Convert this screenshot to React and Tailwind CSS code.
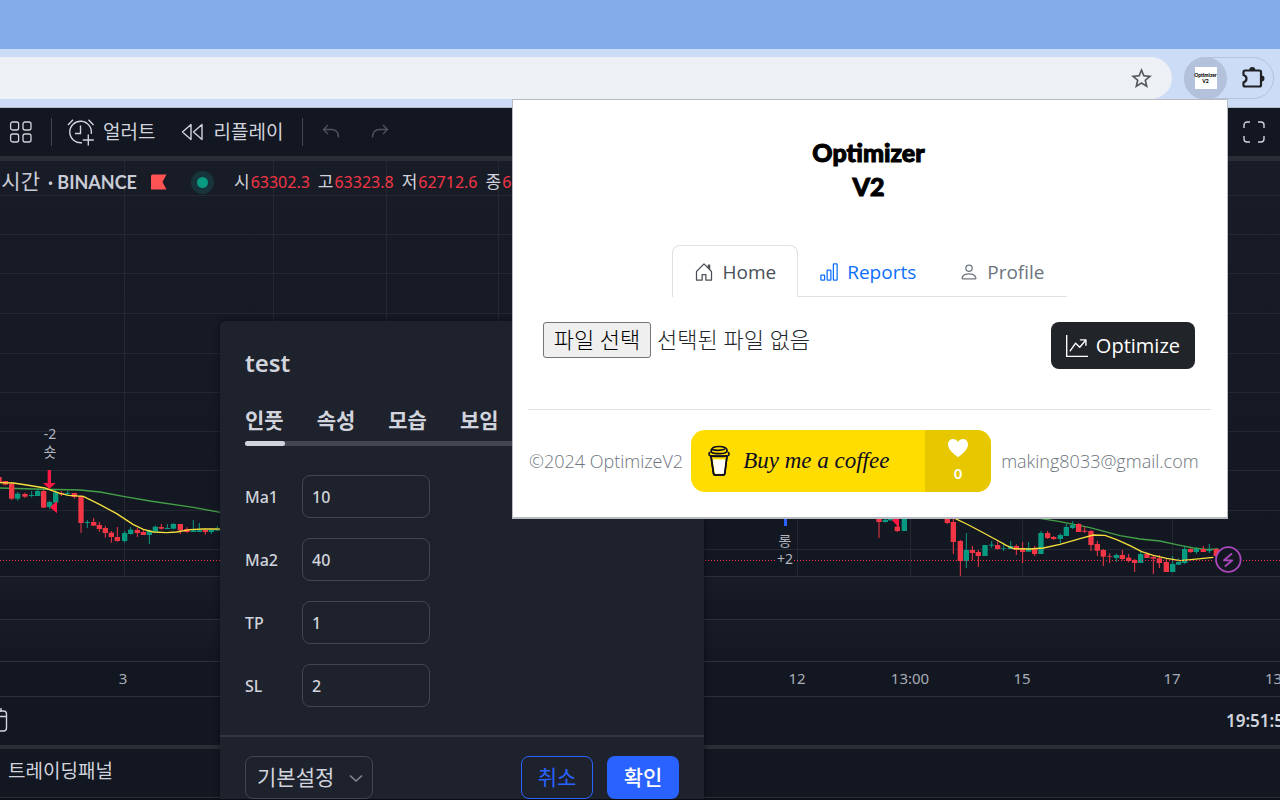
import { useRef, useState } from "react";
import {
  BsBarChart,
  BsGraphUpArrow,
  BsHouseDoor,
  BsPerson,
} from "react-icons/bs";
import { MdStarBorder } from "react-icons/md";

const UP = "#089981";
const DOWN = "#f23645";

// Each candle: [x, body top, body bottom, wick top, wick bottom, rising]
const EARLY = [
  [-3, 201, 216, 201, 216, 0], [16, 213, 224, 213, 226, 0], [35, 221, 266, 218, 270, 0],
  [53, 251, 266, 246, 272, 1], [75, 252, 260, 248, 264, 0], [95, 255, 258, 243, 262, 1],
  [113, 243, 258, 238, 258, 1], [131, 243, 293, 240, 293, 0], [149, 276, 291, 272, 297, 1],
  [167, 247, 278, 240, 280, 1], [184, 249, 253, 243, 258, 0], [203, 249, 252, 243, 256, 1],
  [223, 249, 261, 249, 266, 0], [243, 258, 339, 256, 369, 0], [262, 336, 339, 330, 354, 1],
  [281, 336, 347, 324, 347, 0], [298, 345, 357, 336, 365, 0], [316, 354, 369, 347, 383, 0],
  [334, 368, 381, 363, 398, 0], [352, 381, 393, 351, 395, 0], [374, 369, 393, 363, 398, 1],
  [392, 359, 372, 351, 374, 1], [412, 360, 369, 354, 381, 0], [430, 366, 375, 360, 375, 0],
  [448, 362, 375, 359, 402, 1], [466, 350, 365, 347, 366, 1], [484, 351, 356, 342, 359, 0],
  [502, 354, 357, 342, 357, 1], [520, 342, 356, 339, 358, 1], [541, 342, 361, 342, 372, 0],
  [561, 357, 366, 352, 369, 0], [580, 361, 366, 330, 366, 1], [598, 361, 366, 339, 366, 1],
  [616, 360, 366, 357, 374, 0], [634, 360, 366, 358, 372, 1], [652, 358, 362, 348, 363, 1],
];

const LATE = [
  [-303, 30, 51, 30, 99, 0], [-284, 44, 51, 38, 53, 1], [-268, 40, 46, 36, 47, 1],
  [-248, 65, 78, 60, 81, 0], [-227, 30, 78, 30, 78, 1], [-98, 30, 54, 30, 57, 0],
  [-80, 51, 111, 38, 147, 0], [-59, 108, 168, 105, 213, 0], [-41, 135, 168, 84, 189, 1],
  [-23, 135, 144, 123, 166, 0], [-5, 141, 153, 135, 186, 0], [15, 120, 153, 120, 153, 1],
  [35, 119, 122, 108, 129, 1], [53, 120, 132, 110, 134, 0], [71, 129, 131, 113, 138, 1],
  [92, 123, 132, 108, 132, 1], [109, 123, 135, 118, 150, 0], [128, 129, 141, 111, 174, 0],
  [146, 129, 140, 111, 140, 1], [164, 129, 147, 123, 153, 0], [183, 84, 147, 78, 147, 1],
  [203, 84, 99, 78, 102, 0], [221, 96, 102, 93, 105, 0], [241, 90, 102, 85, 114, 1],
  [259, 66, 93, 57, 93, 1], [278, 60, 69, 48, 72, 1], [296, 57, 81, 54, 81, 0],
  [314, 77, 80, 65, 84, 0], [333, 78, 120, 75, 138, 0], [352, 117, 137, 108, 153, 0],
  [370, 135, 155, 132, 183, 0], [389, 153, 155, 145, 174, 0], [409, 150, 159, 146, 171, 1],
  [427, 150, 162, 135, 166, 0], [446, 158, 168, 147, 172, 0], [464, 165, 174, 162, 201, 0],
  [482, 147, 174, 139, 174, 1], [501, 147, 159, 143, 159, 0], [520, 156, 161, 150, 207, 0],
  [538, 160, 174, 150, 189, 0], [559, 171, 201, 162, 201, 0], [578, 177, 201, 153, 201, 1],
  [596, 171, 179, 160, 180, 1], [614, 132, 174, 124, 177, 1], [632, 132, 141, 130, 144, 0],
  [649, 132, 141, 126, 147, 1], [670, 132, 141, 123, 141, 0], [688, 135, 138, 117, 144, 1],
  [709, 132, 153, 130, 155, 0],
];

function Candles({ data }) {
  return data.map(([x, top, bottom, high, low, rising]) => (
    <g key={x} fill={rising ? UP : DOWN}>
      <rect x={x - 1.5} y={high} width="3" height={low - high} />
      <rect x={x - 8} y={top} width="16" height={bottom - top} />
    </g>
  ));
}

const COLUMNS = [124, 273, 386, 498, 797, 910, 1022, 1172];
const ROWS = [195, 234, 273, 313, 353, 392, 431, 470, 510, 549];

function Chart() {
  return (
    <svg
      className="block h-[500px] w-full"
      viewBox="0 161 1280 500"
      preserveAspectRatio="xMinYMin slice"
      aria-hidden="true"
    >
      <defs>
        <linearGradient id="pane" x1="0" y1="0" x2="0" y2="1">
          <stop offset="0" stopColor="#181c27" />
          <stop offset="1" stopColor="#131722" />
        </linearGradient>
      </defs>
      <rect x="0" y="161" width="1280" height="415" fill="url(#pane)" />
      <rect x="0" y="577" width="1280" height="42" fill="url(#pane)" />
      <rect x="0" y="620" width="1280" height="41" fill="url(#pane)" />
      <g fill="#242832">
        {COLUMNS.map((x) => (
          <rect key={x} x={x} y="161" width="1" height="415" />
        ))}
        {ROWS.map((y) => (
          <rect key={y} x="0" y={y} width="1280" height="1" />
        ))}
      </g>
      <g fill="#2e313b">
        <rect x="0" y="576" width="1280" height="1" />
        <rect x="0" y="619" width="1280" height="1" />
      </g>
      <g transform="translate(0 410) scale(0.33333)">
        <path d="M0 234 100 237 240 240 300 246 374 260 450 273 580 292 660 307" fill="none" stroke="#43a047" strokeWidth="4" />
        <Candles data={EARLY} />
        <path d="M0 218 40 219 80 225 135 234 180 250 205 256 250 259 300 284 350 311 400 344 430 358 460 366 500 368 530 366 570 359 610 357 660 357" fill="none" stroke="#f5df3c" strokeWidth="4" />
        <path d="M143 180h10v39h14l-19 18-19-18h14z" fill="#ff1744" />
        <path d="M150 292 171 273v37z" fill="#ff1744" />
      </g>
      <g transform="translate(980 505) scale(0.33333)">
        <path d="M165 38 240 50 330 68 420 92 480 102 540 108 600 121 640 129 680 133 715 132" fill="none" stroke="#43a047" strokeWidth="4" />
        <Candles data={LATE} />
        <path d="M-110 32-80 38-40 57 0 78 50 105 80 122 100 131 150 132 190 129 240 118 300 101 340 90 375 91 410 104 450 122 485 140 520 151 560 160 600 167 640 163 700 157" fill="none" stroke="#f5df3c" strokeWidth="4" />
        <path d="M-264 46-243 30v38z" fill="#ff1744" />
      </g>
      <rect x="784" y="500" width="3" height="26" fill="#2962ff" />
      <path d="M0 560.5H776M794 560.5H1214M1243 560.5H1280" stroke={DOWN} strokeDasharray="1 2" />
      <circle cx="1228.3" cy="559.5" r="12.3" fill="#131722" stroke="#ab47bc" strokeWidth="1.8" />
      <path d="M1232 553.5 1224 560.3h8.4l-7.6 6.2" fill="none" stroke="#ab47bc" strokeWidth="1.8" strokeLinejoin="round" />
    </svg>
  );
}

function GridIcon() {
  return (
    <svg width="24" height="24" viewBox="0 0 24 24" fill="none" stroke="currentColor" strokeWidth="1.3" aria-hidden="true">
      <rect x="1.6" y="2" width="8" height="8" rx="2" />
      <rect x="14" y="2" width="8" height="8" rx="2" />
      <rect x="1.6" y="14" width="8" height="8" rx="2" />
      <rect x="14" y="14" width="8" height="8" rx="2" />
    </svg>
  );
}

function AlertIcon() {
  return (
    <svg width="28" height="28" viewBox="0 0 28 28" fill="none" stroke="currentColor" strokeWidth="1.4" aria-hidden="true">
      <path d="M15 24.7a10.8 10.8 0 1 1 9.200-8.800" />
      <path d="M13.500 7.500v8H8M1 7l5-5.3M21.5 1.7l5 5.3M21.3 16.5v11M15.8 22h11" />
    </svg>
  );
}

function RewindIcon() {
  return (
    <svg width="23" height="20" viewBox="0 0 23 20" fill="none" stroke="currentColor" strokeWidth="1.4" strokeLinejoin="round" aria-hidden="true">
      <path d="M10 2.500v15L1.500 10zM21 2.500v15L12.500 10z" />
    </svg>
  );
}

function UndoIcon({ flip }) {
  return (
    <svg width="18" height="16" viewBox="0 0 18 16" fill="none" stroke="currentColor" strokeWidth="1.3" aria-hidden="true">
      {flip ? (
        <path d="M12 1l4.5 4.5L12 10M16.500 5.500H8.500Q1.500 5.500 1.500 13.500" />
      ) : (
        <path d="M6 1L1.500 5.500 6 10M1.500 5.500H9.500Q16.500 5.500 16.500 13.500" />
      )}
    </svg>
  );
}

function FullscreenIcon() {
  return (
    <svg width="22" height="22" viewBox="0 0 22 22" fill="none" stroke="currentColor" strokeWidth="1.4" aria-hidden="true">
      <path d="M1 7V4a3 3 0 0 1 3-3h3M15 1h3a3 3 0 0 1 3 3v3M21 15v3a3 3 0 0 1-3 3h-3M7 21H4a3 3 0 0 1-3-3v-3" />
    </svg>
  );
}

function PuzzleIcon() {
  return (
    <svg width="24" height="24" viewBox="0 0 24 24" aria-hidden="true">
      <path
        d="M4 4.500H18.500Q20 4.500 20 6V19Q20 20.500 18.500 20.500H4Q2.500 20.500 2.500 19V16.300Q5.500 15.500 5.500 12.700T2.500 9V6Q2.500 4.500 4 4.500Z"
        fill="none"
        stroke="#1f2124"
        strokeWidth="2.200"
        strokeLinejoin="round"
      />
      <path d="M8.300 4a3 3 0 0 1 6 0zM20.500 9.500a3 3 0 0 1 0 6z" fill="#1f2124" />
    </svg>
  );
}

function CupIcon() {
  return (
    <svg width="24" height="32" viewBox="0 0 24 32" fill="none" stroke="#0d0c22" strokeWidth="1.700" strokeLinejoin="round" aria-hidden="true">
      <path d="M4 11h16l-2.200 17.500Q17.500 30 16 30H8.500Q6.800 30 6.500 28.500z" fill="#ffdd00" />
      <path d="M5.800 14.500h12.800l-1.800 14.300H8z" fill="#fff" stroke="none" />
      <path d="M4 11 6.500 28.500Q6.800 30 8.500 30H16Q17.500 30 17.800 28.500L20 11" />
      <path d="M3.200 7.300Q2 7.500 2 9t1.400 1.800Q12 12 20.800 10.800 22 10.500 22 9t-1.300-1.700" />
      <path d="M4 6.800Q4 1.500 12 1.500T20.200 6Q19 8.700 12 8.700 6 8.700 4 6.800ZM5 4.500Q11 6.300 18 4.300" />
    </svg>
  );
}

function HeartIcon() {
  return (
    <svg width="22" height="20" viewBox="0 0 22 20" fill="#fff" aria-hidden="true">
      <path d="M11 19.300C7 16 1 12 1 6.500 1 3 3.500 1 6 1c2.200 0 4 1 5 3 1-2 2.800-3 5-3 2.500 0 5 2 5 5.500 0 5.500-6 9.500-10 12.800z" />
    </svg>
  );
}

function BrowserBar() {
  return (
    <header>
      <div className="h-[49px] bg-[#84ace9]" />
      <div className="flex h-[59px] items-start border-b border-[#b3bccb] bg-[#ccdcf6] pt-2">
        <div className="flex h-[42px] flex-1 items-center justify-end rounded-r-full bg-[#edf0f5] pr-[18px]">
          <button type="button" aria-label="북마크" className="text-[#54585d]">
            <MdStarBorder className="size-[25px]" />
          </button>
        </div>
        <div className="mr-[6px] ml-3 flex h-[42px] w-[90px] items-center rounded-full border border-[#b4c3db]">
          <button type="button" className="-ml-px flex size-[43px] items-center justify-center rounded-full bg-[#b3c2da]">
            <span className="flex size-[22px] flex-col items-center justify-center bg-white font-['Lato'] text-[5px] leading-[6px] font-black text-black">
              <span>Optimizer</span>
              <span>V2</span>
            </span>
          </button>
          <button type="button" aria-label="확장 프로그램" className="ml-[14px]">
            <PuzzleIcon />
          </button>
        </div>
      </div>
    </header>
  );
}

function Toolbar() {
  return (
    <div className="flex h-[53px] items-center border-b-[5px] border-[#2a2d36] bg-[#131722] pr-[15px] pl-[9px] text-[19px] text-[#d1d4dc]">
      <button type="button" aria-label="레이아웃"><GridIcon /></button>
      <span className="ml-[18px] h-7 w-px bg-[#434651]" />
      <button type="button" className="ml-[15px] flex items-center gap-2">
        <AlertIcon />
        <span>얼러트</span>
      </button>
      <button type="button" className="ml-[26px] flex items-center gap-[9px]">
        <RewindIcon />
        <span>리플레이</span>
      </button>
      <span className="ml-[19px] h-7 w-px bg-[#434651]" />
      <button type="button" aria-label="되돌리기" className="ml-[19px] text-[#50535e]"><UndoIcon /></button>
      <button type="button" aria-label="다시 실행" className="ml-[31px] text-[#50535e]"><UndoIcon flip /></button>
      <button type="button" aria-label="전체 화면" className="ml-auto"><FullscreenIcon /></button>
    </div>
  );
}

function Price({ label, value }) {
  return (
    <span className="flex items-center gap-px">
      <span className="text-[17px] text-[#d1d4dc]">{label}</span>
      <span className="text-base text-[#f23645]">{value}</span>
    </span>
  );
}

function Legend() {
  return (
    <div className="absolute top-1.5 left-0 flex h-[30px] items-center whitespace-nowrap">
      <span className="-ml-[18px] text-[21px] text-[#c9ccd6]">실시간</span>
      <span className="ml-2 font-['Lato'] text-lg font-bold text-[#c9ccd6]">· BINANCE</span>
      <svg className="ml-3.5" width="16" height="16" viewBox="0 0 16 16" aria-hidden="true">
        <path d="M0 2Q0 .5 1.500.5H15.500L11.500 8l4 7.500H0z" fill="#ff5252" />
      </svg>
      <span className="mr-5 ml-6 flex size-[23px] items-center justify-center rounded-full bg-[#17343a]">
        <span className="size-[11px] rounded-full bg-[#089981]" />
      </span>
      <div className="flex gap-2">
        <Price label="시" value="63302.3" />
        <Price label="고" value="63323.8" />
        <Price label="저" value="62712.6" />
        <Price label="종" value="6" />
      </div>
    </div>
  );
}

function TradingPage() {
  return (
    <main>
      <Toolbar />
      <div className="relative overflow-hidden">
        <Chart />
        <Legend />
        <div className="absolute top-[264px] left-[50px] -translate-x-1/2 text-center text-sm leading-[18px] text-[#b2b5be]">
          <div>-2</div>
          <div>숏</div>
        </div>
        <div className="absolute top-[371px] left-[785px] -translate-x-1/2 text-center text-sm leading-[18px] text-[#b2b5be]">
          <div>롱</div>
          <div>+2</div>
        </div>
      </div>
      <div className="relative h-9 overflow-hidden border-y border-[#2e313b] bg-[#131722] text-[15px] leading-8 text-[#a9acb6]">
        <span className="absolute left-[123px] -translate-x-1/2">3</span>
        <span className="absolute left-[797px] -translate-x-1/2">12</span>
        <span className="absolute left-[910px] -translate-x-1/2">13:00</span>
        <span className="absolute left-[1022px] -translate-x-1/2">15</span>
        <span className="absolute left-[1172px] -translate-x-1/2">17</span>
        <span className="absolute left-[1265px]">13:00</span>
      </div>
      <div className="flex h-[52px] items-center justify-between overflow-hidden border-b-4 border-[#2a2d36] bg-[#131722] text-[#d1d4dc]">
        <button type="button" aria-label="날짜 이동" className="-ml-[15px]">
          <svg width="23" height="26" viewBox="0 0 23 26" fill="none" stroke="currentColor" strokeWidth="1.400" aria-hidden="true">
            <rect x="1" y="3" width="20.500" height="20" rx="3" />
            <path d="M1 8.500h20M6 0v4M16 0v4" />
          </svg>
        </button>
        <span className="-mr-1 text-[17px] font-semibold">19:51:5</span>
      </div>
      <div className="flex h-[49px] items-center border-b border-[#2e313b] bg-[#131722] pb-1 pl-2 text-[19px] text-[#d1d4dc]">
        트레이딩패널
      </div>
      <div className="h-0.5 bg-[#0e1018]" />
    </main>
  );
}

const FIELDS = [
  { name: "Ma1", value: "10" },
  { name: "Ma2", value: "40" },
  { name: "TP", value: "1" },
  { name: "SL", value: "2" },
];

function SettingsDialog() {
  return (
    <section
      role="dialog"
      aria-label="test"
      className="absolute top-[321px] left-[220px] w-[484px] rounded-t-md bg-[#1e222d] pt-[26px] text-[#d1d4dc] shadow-[0_0_6px_rgba(0,0,0,0.5)]"
    >
      <h2 className="px-[25px] text-2xl leading-8 font-semibold">test</h2>
      <div className="mt-7 px-[25px]">
        <div role="tablist" className="flex gap-[33px] text-[21px] leading-[26px] font-semibold">
          <button type="button" role="tab" aria-selected="true">인풋</button>
          <button type="button" role="tab" aria-selected="false">속성</button>
          <button type="button" role="tab" aria-selected="false">모습</button>
          <button type="button" role="tab" aria-selected="false">보임</button>
        </div>
        <div className="mt-2 h-[5px] rounded-full bg-[#434651]">
          <div className="h-full w-10 rounded-full bg-[#d1d4dc]" />
        </div>
      </div>
      <div className="mt-[29px] grid gap-5 px-[25px]">
        {FIELDS.map((field) => (
          <div key={field.name} className="flex items-center">
            <label htmlFor={field.name} className="w-[57px] text-base font-medium">
              {field.name}
            </label>
            <input
              id={field.name}
              defaultValue={field.value}
              className="h-[43px] w-32 rounded-lg border border-[#434651] bg-transparent px-[9px] text-base font-medium outline-none"
            />
          </div>
        ))}
      </div>
      <div className="mt-7 flex items-center border-t-2 border-[#313540] px-[25px] pt-[19px]">
        <div className="relative">
          <select
            aria-label="기본설정"
            className="h-[43px] w-32 appearance-none rounded-lg border border-[#434651] bg-transparent pl-[11px] text-[21px] outline-none"
          >
            <option>기본설정</option>
          </select>
          <svg className="pointer-events-none absolute top-[18px] right-2.5" width="14" height="9" viewBox="0 0 14 9" fill="none" stroke="#868993" strokeWidth="1.600" aria-hidden="true">
            <path d="M1 1.500l6 5.500 6-5.500" />
          </svg>
        </div>
        <button type="button" className="ml-auto h-[43px] w-[72px] rounded-lg border border-[#2962ff] text-[21px] text-[#2962ff]">
          취소
        </button>
        <button type="button" className="ml-3.5 h-[43px] w-[72px] rounded-lg bg-[#2962ff] text-[21px] font-medium text-white">
          확인
        </button>
      </div>
    </section>
  );
}

function OptimizerPopup() {
  const picker = useRef(null);
  const [fileName, setFileName] = useState("선택된 파일 없음");

  return (
    <section
      aria-label="Optimizer V2"
      className="absolute top-[99px] right-[52px] w-[716px] border border-b-2 border-[#b9bac2] bg-white pt-[35px] pr-4 pb-[25px] pl-[15px] font-['Open_Sans','Noto_Sans_CJK_KR',sans-serif]"
    >
      <h1 className="pr-0.5 text-center font-['Lato'] text-[25px] leading-[34px] font-black text-black [-webkit-text-stroke:1px_black]">
        Optimizer
        <br />
        V2
      </h1>
      <nav className="mt-[42px] flex justify-center text-[19px]">
        <a href="#home" className="flex h-[52px] items-center gap-2 rounded-t-lg border border-b-0 border-[#dee2e6] px-[21px] pt-px text-[#495057]">
          <BsHouseDoor className="size-5" />
          Home
        </a>
        <a href="#reports" className="flex h-[52px] items-center gap-2 border-b border-[#dee2e6] px-[21px] pt-[3px] text-[#0d6efd]">
          <BsBarChart className="size-5" />
          Reports
        </a>
        <a href="#profile" className="flex h-[52px] items-center gap-2 border-b border-[#dee2e6] px-[22px] pt-[3px] text-[#6c757d]">
          <BsPerson className="size-5" />
          Profile
        </a>
      </nav>
      <div className="mt-[25px] flex items-start justify-between pr-4 pl-[15px]">
        <div className="flex items-center gap-1.5 text-[22px] font-light text-[#212529]">
          <button
            type="button"
            onClick={() => picker.current.click()}
            className="h-9 w-[108px] rounded-[3px] border border-[#767676] bg-[#efefef] pb-0.5 leading-8 whitespace-nowrap text-black"
          >
            파일 선택
          </button>
          <input
            ref={picker}
            type="file"
            aria-label="파일 선택"
            className="hidden"
            onChange={(e) => setFileName(e.target.files[0]?.name ?? "선택된 파일 없음")}
          />
          <span className="pb-0.5 leading-8">{fileName}</span>
        </div>
        <button type="button" className="flex h-[47px] items-center gap-2 rounded-lg bg-[#212529] px-[15px] text-xl text-white">
          <BsGraphUpArrow className="size-[22px]" />
          Optimize
        </button>
      </div>
      <footer className="mt-10 flex items-center border-t border-[#dee2e6] pt-5 pl-px text-lg font-light text-[#6c757d]">
        <span>©2024 OptimizeV2</span>
        <a href="#coffee" className="mr-2.5 ml-2 flex h-[62px] w-[300px] overflow-hidden rounded-[14px] bg-[#ffdd00] text-[#0d0c22]">
          <span className="flex flex-1 items-center gap-3 pl-4">
            <CupIcon />
            <span className="font-['Liberation_Serif'] text-[23px] font-normal italic">Buy me a coffee</span>
          </span>
          <span className="flex w-[66px] flex-col items-center bg-[#e6c700] pt-2">
            <HeartIcon />
            <span className="mt-1.5 font-['Lato'] text-sm leading-5 font-black text-white">0</span>
          </span>
        </a>
        <a href="mailto:making8033@gmail.com">making8033@gmail.com</a>
      </footer>
    </section>
  );
}

export default function App() {
  return (
    <div className="relative min-h-screen overflow-hidden bg-[#0e1018] font-['Noto_Sans','Noto_Sans_CJK_KR',sans-serif]">
      <BrowserBar />
      <TradingPage />
      <SettingsDialog />
      <OptimizerPopup />
    </div>
  );
}
